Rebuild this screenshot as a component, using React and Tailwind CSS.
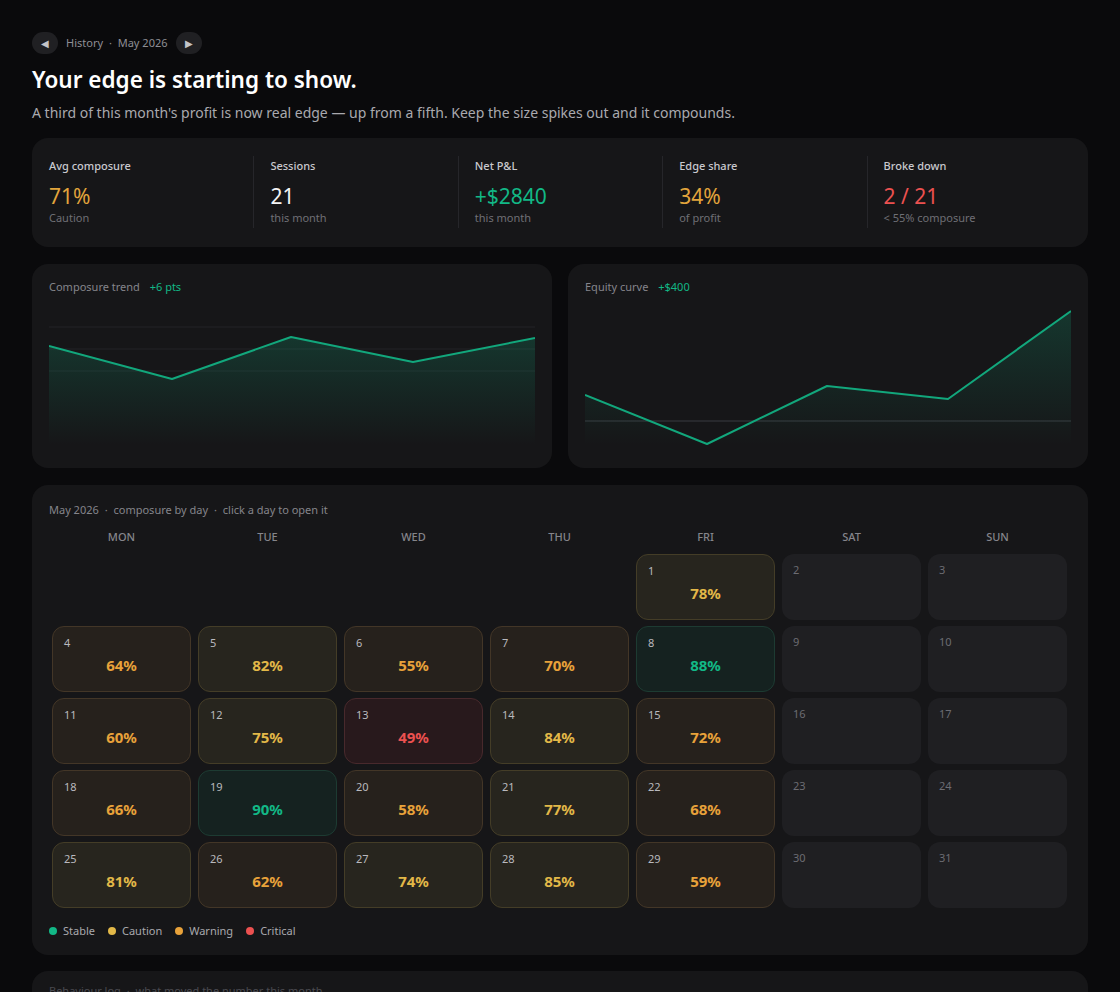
import React from 'react';

// composure tiers -> cell and text colours
const tiers = {
  stable: { cell: 'bg-[#152220] border-[#1d3b32]', text: 'text-[#12b886]', dot: 'bg-[#12b886]' },
  caution: { cell: 'bg-[#27251e] border-[#443d27]', text: 'text-[#e2b848]', dot: 'bg-[#e2b848]' },
  warning: { cell: 'bg-[#26211c] border-[#433627]', text: 'text-[#e8a23a]', dot: 'bg-[#e8a23a]' },
  critical: { cell: 'bg-[#28191c] border-[#48292c]', text: 'text-[#ec5150]', dot: 'bg-[#ec5150]' },
};

function tierOf(v) {
  if (v >= 88) return 'stable';
  if (v >= 74) return 'caution';
  if (v >= 55) return 'warning';
  return 'critical';
}

const stats = [
  { label: 'Avg composure', value: '71%', sub: 'Caution', color: 'text-[#e3a53c]' },
  { label: 'Sessions', value: '21', sub: 'this month', color: 'text-[#f4f4f5]' },
  { label: 'Net P&L', value: '+$2840', sub: 'this month', color: 'text-[#12b886]' },
  { label: 'Edge share', value: '34%', sub: 'of profit', color: 'text-[#e3a53c]' },
  { label: 'Broke down', value: '2 / 21', sub: '< 55% composure', color: 'text-[#ec5150]' },
];

// composure by day, missing = no session
const days = {
  1: 78, 4: 64, 5: 82, 6: 55, 7: 70, 8: 88,
  11: 60, 12: 75, 13: 49, 14: 84, 15: 72,
  18: 66, 19: 90, 20: 58, 21: 77, 22: 68,
  25: 81, 26: 62, 27: 74, 28: 85, 29: 59,
};

function Chart({ id, points, grid, zero }) {
  const line = points.map((p) => p.join(',')).join(' ');
  const area = `0,140 ${line} 486,140`;
  return (
    <svg viewBox="0 0 486 140" className="w-full h-[140px] block" preserveAspectRatio="none">
      <defs>
        <linearGradient id={id} x1="0" y1="0" x2="0" y2="1">
          <stop offset="0%" stopColor="#12b886" stopOpacity="0.2" />
          <stop offset="100%" stopColor="#12b886" stopOpacity="0" />
        </linearGradient>
      </defs>
      {grid.map((y) => (
        <line key={y} x1="0" x2="486" y1={y} y2={y} stroke="#222226" strokeWidth="1" />
      ))}
      {zero != null && <line x1="0" x2="486" y1={zero} y2={zero} stroke="#2e2f33" strokeWidth="1.5" />}
      <polygon points={area} fill={`url(#${id})`} />
      <polyline points={line} fill="none" stroke="#12a77c" strokeWidth="2" strokeLinejoin="round" />
    </svg>
  );
}

function DayCell({ day }) {
  if (!day) return <div className="h-[66px]" />;
  const v = days[day];
  if (v == null) {
    return (
      <div className="h-[66px] rounded-xl bg-[#1f1f22] px-[11px] pt-[8px]">
        <div className="text-[11px] leading-4 text-[#6c6c72]">{day}</div>
      </div>
    );
  }
  const t = tiers[tierOf(v)];
  return (
    <div className={`h-[66px] rounded-xl border ${t.cell} px-[11px] pt-[8px]`}>
      <div className="text-[11px] leading-4 text-[#b9b9be]">{day}</div>
      <div className={`mt-[4px] text-center text-[15px] leading-5 font-bold ${t.text}`}>{v}%</div>
    </div>
  );
}

export default function App() {
  // May 2026 starts on a Friday
  const cells = [null, null, null, null, ...Array.from({ length: 31 }, (_, i) => i + 1)];

  return (
    <div className="min-h-screen bg-[#0a0a0c] px-8 pt-8 pb-10 font-['Noto_Sans',sans-serif] text-[#f4f4f5]">
      {/* month switcher */}
      <div className="flex items-center gap-2">
        <button className="w-[26px] h-[22px] rounded-full bg-[#202023] text-[#c4c4c8] text-[10px] flex items-center justify-center">◀</button>
        <span className="text-[11px] leading-4 text-[#8e8e94]">History <span className="mx-[3px]">·</span> May 2026</span>
        <button className="w-[26px] h-[22px] rounded-full bg-[#202023] text-[#c4c4c8] text-[10px] flex items-center justify-center">▶</button>
      </div>

      <h1 className="mt-[10px] text-[22.5px] leading-8 font-semibold text-white">Your edge is starting to show.</h1>
      <p className="mt-[7px] text-[14px] leading-5 text-[#a9a9ae]">
        A third of this month's profit is now real edge — up from a fifth. Keep the size spikes out and it compounds.
      </p>

      {/* headline numbers */}
      <div className="mt-[15px] rounded-2xl bg-[#161618] px-[17px] pt-[18px] pb-[19px] grid grid-cols-5">
        {stats.map((s, i) => (
          <div key={s.label} className={`py-[2px] ${i > 0 ? 'border-l border-[#26262a] pl-4' : ''}`}>
            <div className="text-[11px] leading-4 font-medium text-[#c9c9ce]">{s.label}</div>
            <div className={`mt-2 text-[21px] leading-7 ${s.color}`}>{s.value}</div>
            <div className="text-[11px] leading-4 text-[#6f6f75]">{s.sub}</div>
          </div>
        ))}
      </div>

      {/* trend charts */}
      <div className="mt-[17px] grid grid-cols-2 gap-4">
        <div className="rounded-2xl bg-[#161618] px-[17px] pt-[15px] pb-[23px]">
          <div className="text-[11px] leading-4 text-[#85858b]">
            Composure trend <span className="ml-[7px] text-[#12b886]">+6 pts</span>
          </div>
          <div className="mt-[10px]">
            <Chart
              id="trendFill"
              grid={[22, 44, 66]}
              points={[[0, 41], [123, 74], [242, 32], [364, 57], [486, 33]]}
            />
          </div>
        </div>
        <div className="rounded-2xl bg-[#161618] px-[17px] pt-[15px] pb-[23px]">
          <div className="text-[11px] leading-4 text-[#85858b]">
            Equity curve <span className="ml-[7px] text-[#12b886]">+$400</span>
          </div>
          <div className="mt-[10px]">
            <Chart
              id="equityFill"
              grid={[]}
              zero={116}
              points={[[0, 90], [122, 139], [242, 81], [363, 94], [486, 6]]}
            />
          </div>
        </div>
      </div>

      {/* calendar */}
      <div className="mt-[17px] rounded-2xl bg-[#161618] px-[17px] pt-[17px] pb-4">
        <div className="text-[11px] leading-4 text-[#85858b]">
          May 2026 <span className="mx-[3px]">·</span> composure by day <span className="mx-[3px]">·</span> click a day to open it
        </div>
        <div className="ml-[3px] mr-[4px]">
          <div className="mt-[11px] grid grid-cols-7 gap-x-[7px]">
            {['MON', 'TUE', 'WED', 'THU', 'FRI', 'SAT', 'SUN'].map((d) => (
              <div key={d} className="text-center text-[11px] leading-4 font-medium text-[#85858b]">{d}</div>
            ))}
          </div>
          <div className="mt-[9px] grid grid-cols-7 gap-x-[7px] gap-y-[6px]">
            {cells.map((d, i) => (
              <DayCell key={i} day={d} />
            ))}
          </div>
        </div>
        <div className="mt-[15px] flex items-center gap-[13px] text-[11px] leading-4 text-[#a9a9ae]">
          {[['stable', 'Stable'], ['caution', 'Caution'], ['warning', 'Warning'], ['critical', 'Critical']].map(([k, l]) => (
            <div key={k} className="flex items-center gap-[6px]">
              <span className={`w-2 h-2 rounded-full ${tiers[k].dot}`} />
              {l}
            </div>
          ))}
        </div>
      </div>

      {/* session log */}
      <div className="mt-4 rounded-2xl bg-[#161618] px-[17px] pt-3 pb-6">
        <div className="text-[11px] leading-4 text-[#4a4a50]">Behaviour log <span className="mx-[3px]">·</span> what moved the number this month</div>
        <div className="mt-4 h-40" />
      </div>
    </div>
  );
}
